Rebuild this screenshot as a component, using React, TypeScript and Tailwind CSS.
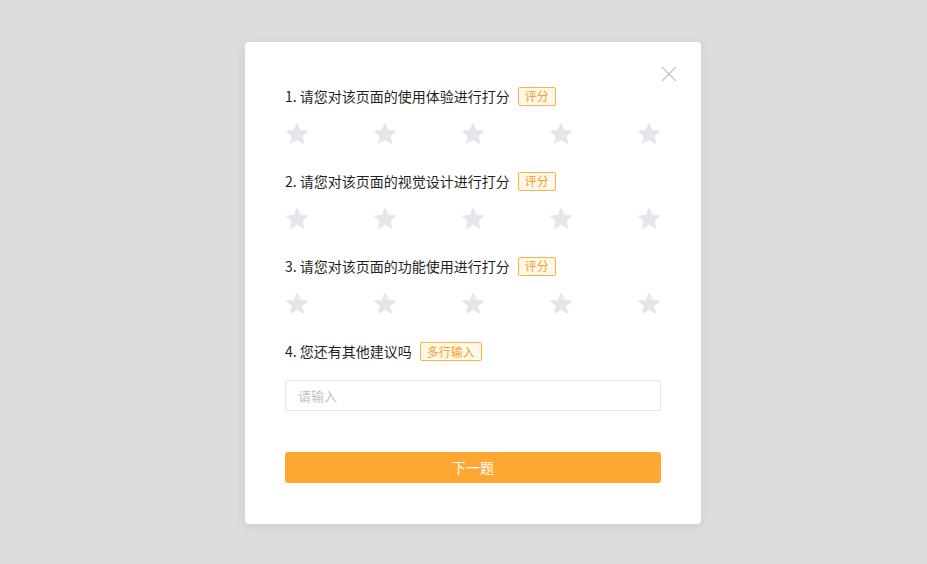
const questions = [
  { title: "1. 请您对该页面的使用体验进行打分", tag: "评分" },
  { title: "2. 请您对该页面的视觉设计进行打分", tag: "评分" },
  { title: "3. 请您对该页面的功能使用进行打分", tag: "评分" },
];

const Star = () => (
  <svg width="24" height="24" viewBox="0 0 24 24" className="block">
    <path
      d="M12 1.2l3.2 7 7.6.7-5.8 5 1.8 7.5L12 17.5l-6.8 3.9 1.8-7.5-5.8-5 7.6-.7z"
      fill="#e5e6eb"
      stroke="#e5e6eb"
      strokeWidth="0.8"
      strokeLinejoin="round"
    />
  </svg>
);

const Tag = ({ children }: { children: string }) => (
  <span className="ml-2 inline-flex h-[19px] items-center rounded-[2px] border border-[#ffb13d] bg-[#fff8ec] px-[6px] text-[12px] leading-none text-[#ff9a1f]">
    {children}
  </span>
);

const App = () => {
  return (
    <div
      className="flex h-[564px] w-full items-start bg-[#dcdddf] pl-[245px] pt-[42px]"
      style={{ fontFamily: '"Noto Sans CJK SC", "Liberation Sans", sans-serif' }}
    >
      <div className="relative w-[456px] rounded-[4px] bg-white px-10 pb-[41px] pt-[44px] shadow-[0_2px_12px_rgba(0,0,0,0.08)]">
        <button className="absolute right-[24px] top-[24px] text-[#c4c4c4]" aria-label="close">
          <svg width="16" height="16" viewBox="0 0 16 16" className="block">
            <path d="M1 1l14 14M15 1L1 15" stroke="currentColor" strokeWidth="1.3" />
          </svg>
        </button>

        {questions.map((q) => (
          <div key={q.title} className="mb-[25px]">
            <div className="flex h-5 items-center text-[14px] text-[#1f1f1f]">
              <span>{q.title}</span>
              <Tag>{q.tag}</Tag>
            </div>
            <div className="mt-4 flex justify-between">
              {[0, 1, 2, 3, 4].map((i) => (
                <Star key={i} />
              ))}
            </div>
          </div>
        ))}

        <div className="flex h-5 items-center pt-px text-[14px] text-[#1f1f1f]">
          <span>4. 您还有其他建议吗</span>
          <Tag>多行输入</Tag>
        </div>
        <input
          placeholder="请输入"
          className="mt-[19px] block h-[31px] w-full rounded-[2px] border border-[#e3e3e3] px-3 text-[13px] text-[#262626] outline-none placeholder:text-[#c2c2c2]"
        />

        <button className="mt-[41px] flex h-[31px] w-full items-center justify-center rounded-[3px] bg-[#ffa733] text-[14px] text-white">
          下一题
        </button>
      </div>
    </div>
  );
};

export default App;
